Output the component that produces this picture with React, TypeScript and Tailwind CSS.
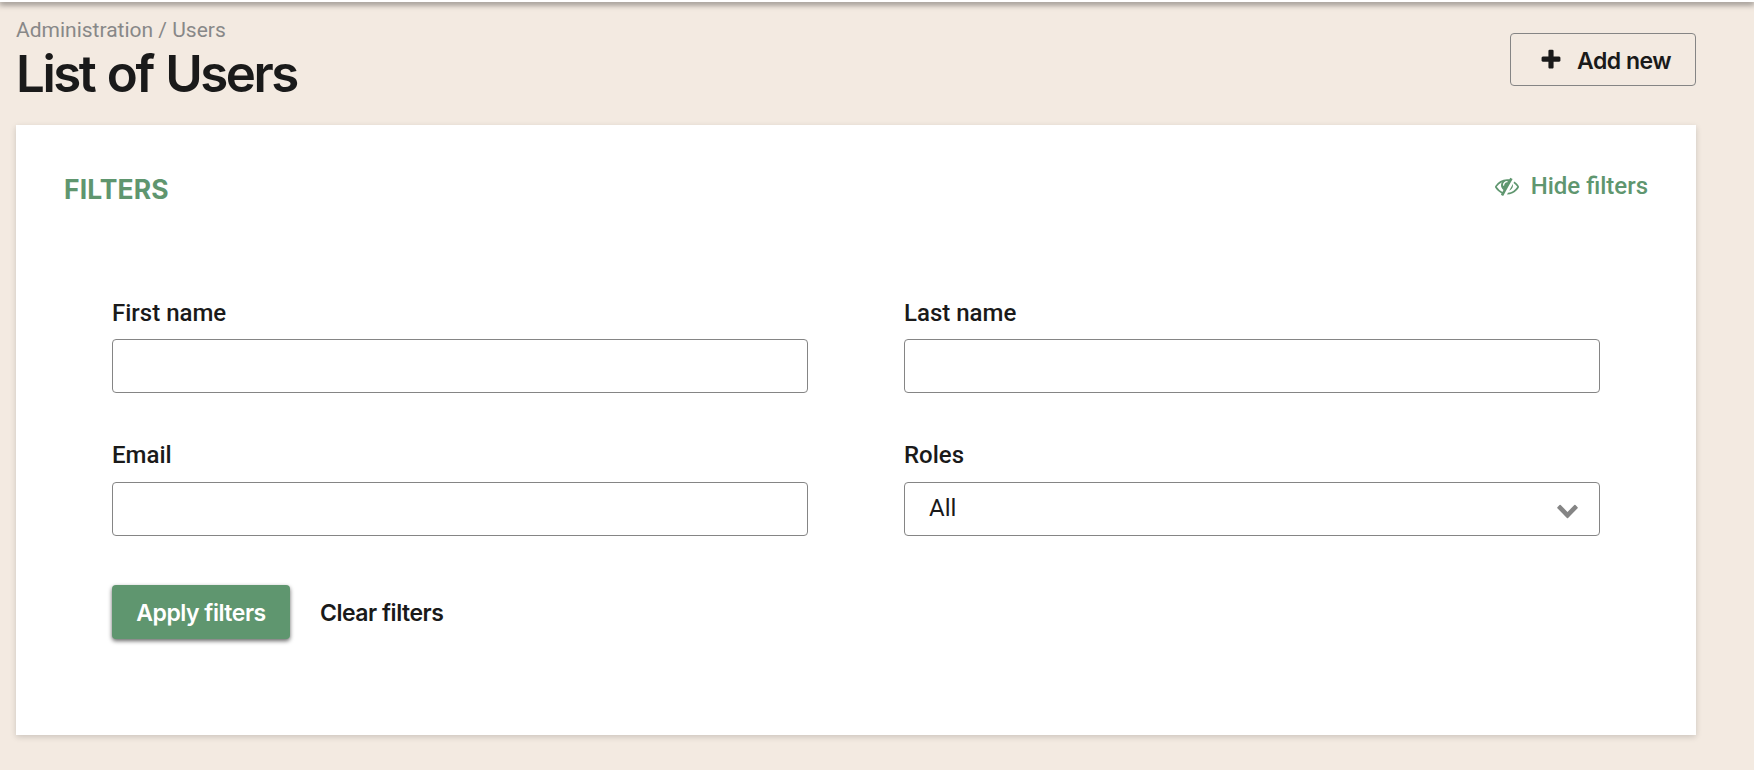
import type { ReactNode } from 'react'

type IconProps = {
  path: string
  className: string
}

const plusPath =
  'M1600 736v192q0 40-28 68t-68 28h-416v416q0 40-28 68t-68 28h-192q-40 0-68-28t-28-68v-416h-416q-40 0-68-28t-28-68v-192q0-40 28-68t68-28h416v-416q0-40 28-68t68-28h192q40 0 68 28t28 68v416h416q40 0 68 28t28 68z'
const eyeSlashPath =
  'M555 1335l78-141q-87-63-136-159t-49-203q0-121 61-225-229 117-381 353 167 258 427 375zm389-759q0-20-14-34t-34-14q-125 0-214.5 89.5t-89.5 214.5q0 20 14 34t34 14 34-14 14-34q0-86 61-147t147-61q20 0 34-14t14-34zm363-191q0 7-1 9-106 189-316 567t-315 566l-49 89q-10 16-28 16-12 0-134-70-16-10-16-28 0-12 44-87-143-65-263.5-173t-208.5-245q-20-31-20-69t20-69q153-235 380-371t496-136q89 0 180 17l54-97q10-16 28-16 5 0 18 6t31 15.5 33 18.5 31.5 18.5 19.5 11.5q16 10 16 27zm37 447q0 139-79 253.5t-209 164.5l280-502q8 45 8 84zm448 128q0 35-20 69-39 64-109 145-150 172-347.5 267t-419.5 95l74-132q212-18 392.5-137t301.5-307q-115-179-282-294l63-112q95 64 182.5 153t144.5 184q20 34 20 69z'
const chevronPath =
  'M1683 808l-742 741q-19 19-45 19t-45-19l-742-741q-19-19-19-45.5t19-45.5l166-165q19-19 45-19t45 19l531 531 531-531q19-19 45-19t45 19l166 165q19 19 19 45.5t-19 45.5z'

const Icon = ({ path, className }: IconProps) => (
  <svg viewBox="0 0 1792 1792" fill="currentColor" className={className}>
    <path d={path} />
  </svg>
)

const Field = ({ label, children }: { label: string; children: ReactNode }) => (
  <label className="block">
    <span className="block pb-[10.8px] text-2xl leading-8 font-medium">{label}</span>
    {children}
  </label>
)

const TextInput = () => (
  <input
    type="text"
    className="block h-[54px] w-full rounded-[4px] border border-[#858585] bg-white px-6"
  />
)

const App = () => {
  return (
    <div className="h-[770px] overflow-hidden bg-[#f3eae1] font-[Roboto,sans-serif] text-[#1a1a1a]">
      <div className="h-0.5 bg-white shadow-[0_1px_6px_1px_rgba(0,0,0,0.6)]" />
      <header className="flex h-[123px] items-start justify-between pr-[58px] pl-4">
        <div className="pt-4">
          <p className="text-[21px] leading-6 text-[#888888]">Administration / Users</p>
          <h1 className="mt-0.5 font-[Inter,sans-serif] text-[51px] leading-[60px] font-semibold tracking-[-0.048em] [word-spacing:2px]">
            List of Users
          </h1>
        </div>
        <button className="mt-[31px] flex h-[53px] w-[186px] items-center rounded-[4px] border border-[#858585] pl-7 font-[Inter,sans-serif] text-[23px] font-semibold tracking-[-0.021em] whitespace-nowrap">
          <Icon path={plusPath} className="mr-3.5 size-6 shrink-0" />
          <span className="pt-[3px]">Add new</span>
        </button>
      </header>

      <main className="mr-[58px] ml-4 h-[610px] bg-white px-12 pt-12 shadow-[0_2px_6px_rgba(0,0,0,0.16)]">
        <div className="flex h-[123.6px] items-start justify-between text-[#5f966f]">
          <h2 className="font-[Inter,sans-serif] text-[26.5px] leading-8 font-bold tracking-[0.003em]">
            FILTERS
          </h2>
          <button className="-mt-px flex items-center gap-3 text-2xl leading-7 font-medium">
            <Icon path={eyeSlashPath} className="size-6" />
            Hide filters
          </button>
        </div>

        <form className="px-12">
          <div className="grid grid-cols-2 gap-x-24 gap-y-[45.8px]">
            <Field label="First name">
              <TextInput />
            </Field>
            <Field label="Last name">
              <TextInput />
            </Field>
            <Field label="Email">
              <TextInput />
            </Field>
            <Field label="Roles">
              <div className="flex h-[54px] items-center justify-between rounded-[4px] border border-[#858585] pr-5 pl-6 text-2xl">
                <span className="pb-0.5">All</span>
                <Icon path={chevronPath} className="mt-px size-[23px] text-[#858585]" />
              </div>
            </Field>
          </div>

          <div className="mt-[49px] flex items-center gap-[30px] font-[Inter,sans-serif] text-[23px] font-semibold tracking-[-0.021em] whitespace-nowrap">
            <button
              type="button"
              className="h-[54px] w-[178px] rounded-[4px] bg-[#5f966f] pt-0.5 text-white shadow-[0_2px_4px_rgba(0,0,0,0.6)]"
            >
              Apply filters
            </button>
            <button type="button" className="pt-0.5">
              Clear filters
            </button>
          </div>
        </form>
      </main>
    </div>
  )
}

export default App
